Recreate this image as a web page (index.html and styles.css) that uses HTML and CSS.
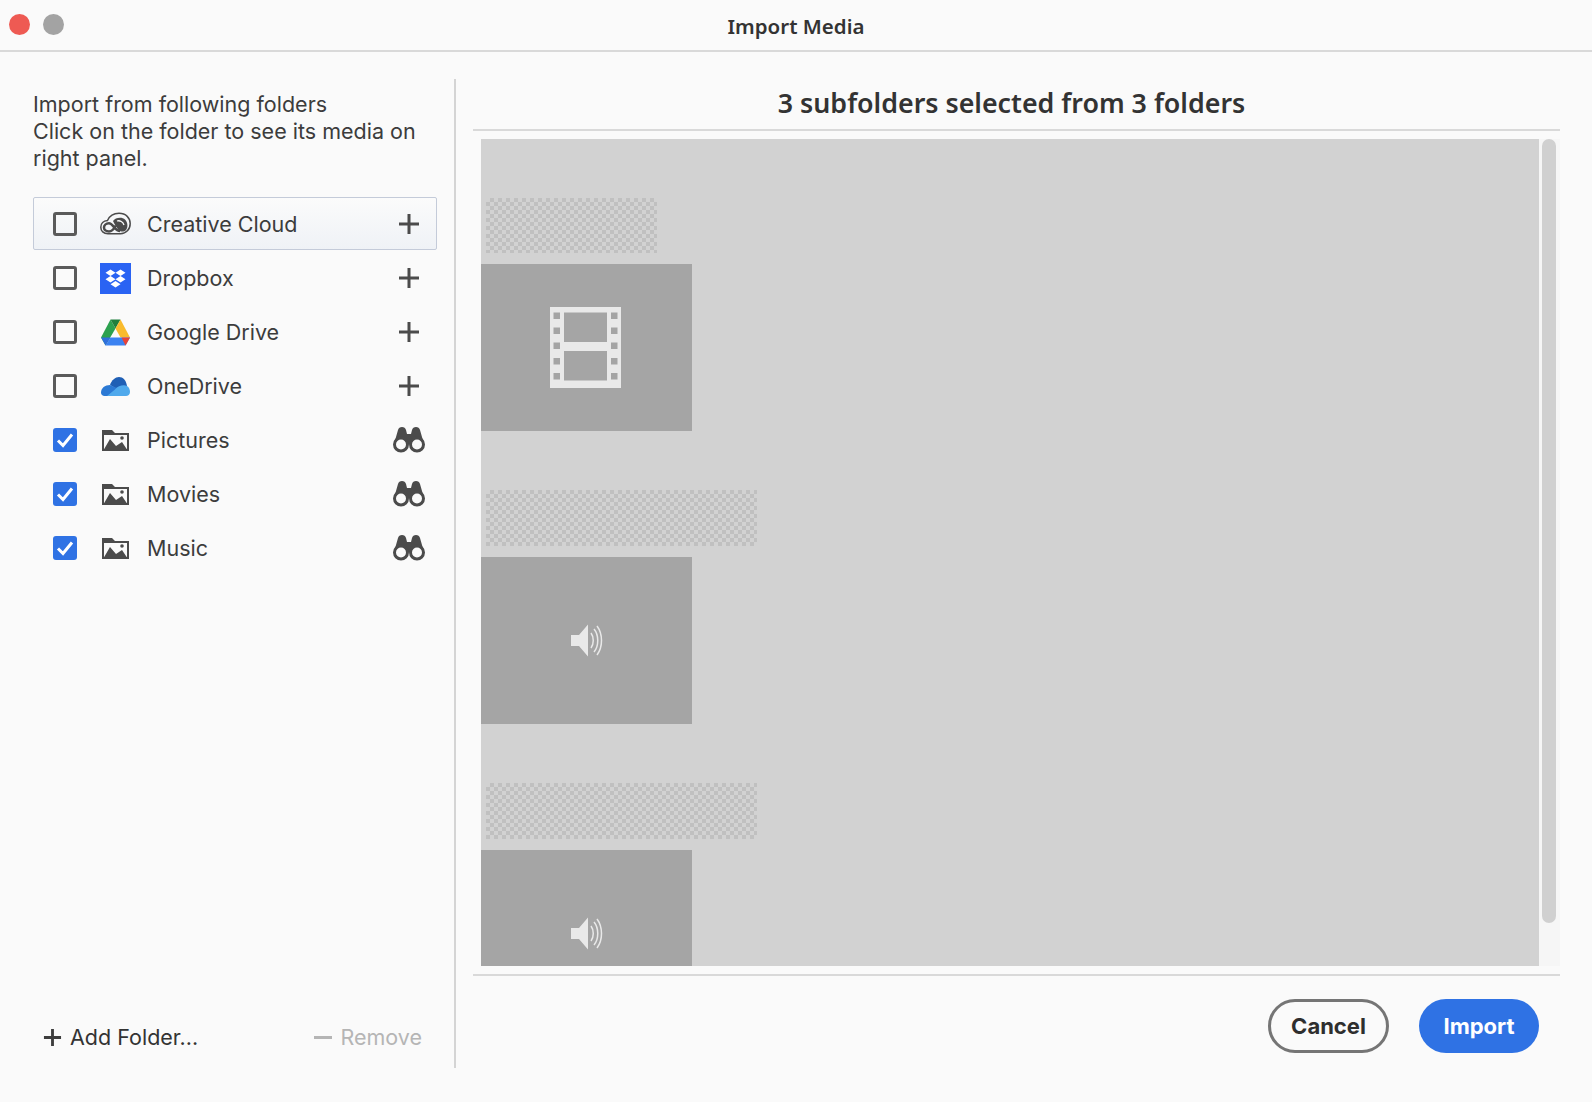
FILE: index.html
```html
<!DOCTYPE html>
<html lang="en">
<head>
  <meta charset="UTF-8" />
  <title>Import Media</title>
  <link rel="stylesheet" href="styles.css">
</head>
<body>
  <svg class="icon-defs" width="0" height="0">
    <symbol id="plus" viewBox="0 0 22 22">
      <path d="M11 1V21M1 11H21" stroke="#4b4b4b" stroke-width="3" fill="none"/>
    </symbol>
    <symbol id="folder" viewBox="0 0 27 21">
      <path fill="#4b4b4b" d="M0 0H10L13 3H27V21H0Z"/>
      <rect x="2" y="5" width="23" height="14" fill="#fafafa"/>
      <path fill="#4b4b4b" d="M1 21L8 9L14 16L20 12L26 21Z"/>
      <circle cx="20" cy="8" r="1.800" fill="#4b4b4b"/>
    </symbol>
    <symbol id="binoculars" viewBox="0 0 32 26">
      <path fill="#4b4b4b" d="M5 3C5.500 1 7 0 9 0C11 0 12.500 1 13 3L14 7H18L19 3C19.500 1 21 0 23 0C25 0 26.500 1 27 3L31 17H1Z"/>
      <circle cx="8" cy="17.500" r="6.500" fill="#fafafa" stroke="#4b4b4b" stroke-width="3"/>
      <circle cx="24" cy="17.500" r="6.500" fill="#fafafa" stroke="#4b4b4b" stroke-width="3"/>
    </symbol>
    <symbol id="speaker" viewBox="0 0 32 33">
      <path fill="#e9e9e9" d="M0 11H8L17 .5V32.500L8 22H0Z"/>
      <path fill="none" stroke="#e9e9e9" stroke-width="1.500" d="M20 9C23 13 23 20 20 24M23 5C28 11 28 22 23 28M26 2C32 10 32 23 26 31"/>
    </symbol>
  </svg>

  <div class="titlebar">
    <div class="traffic-lights">
      <span class="light light-red"></span>
      <span class="light light-gray"></span>
    </div>
    <div class="window-title">Import Media</div>
  </div>

  <div class="main-container">
    <div class="sidebar">
      <p class="intro">Import from following folders<br>Click on the folder to see its media on right panel.</p>

      <div class="folder-list">
        <div class="folder-row active">
          <span class="check"></span>
          <svg class="source-icon" viewBox="0 -4.500 31 31">
            <path fill="none" stroke="#4b4b4b" stroke-width="1.500" d="M8 21.200C3.500 21.200 .8 18.500 .8 14.800C.8 11 3.500 8.300 7.500 8C9.500 3.500 14 .8 19 .8C26 .8 30.200 5.500 30.200 11C30.200 17 26 21.200 20.500 21.200Z"/>
            <path fill="none" stroke="#4b4b4b" stroke-width="2.500" d="M20 18.500C15 18.500 13 10.800 9 10.800C6 10.800 4 12.800 4 15C4 17.300 6 19 9 19C12 19 14 16.500 16 13"/>
            <path fill="#4b4b4b" d="M13 8.500C15 5 22 4 25 7C28 10 28 15 26 17.500C24 19.500 20.500 19.500 18.500 17.500L14.500 11.500Z"/>
            <path fill="none" stroke="#fafafa" stroke-width="1.300" d="M17 8.500C20 7.500 23 9.500 24 12.500"/>
          </svg>
          <span class="folder-name">Creative Cloud</span>
          <svg class="row-action plus-icon"><use href="#plus"/></svg>
        </div>
        <div class="folder-row">
          <span class="check"></span>
          <svg class="source-icon" viewBox="0 0 31 31">
            <rect width="31" height="31" fill="#2a63f3"/>
            <path fill="#fff" d="M10.500 6.500L15.500 9.700L10.500 13L5.500 9.700ZM20.500 6.500L25.500 9.700L20.500 13L15.500 9.700ZM10.500 13L15.500 16.300L10.500 19.500L5.500 16.300ZM20.500 13L25.500 16.300L20.500 19.500L15.500 16.300ZM15.500 18L20.500 21.200L15.500 24.500L10.500 21.200Z"/>
          </svg>
          <span class="folder-name">Dropbox</span>
          <svg class="row-action plus-icon"><use href="#plus"/></svg>
        </div>
        <div class="folder-row">
          <span class="check"></span>
          <svg class="source-icon" viewBox="-1 -2.500 31 31">
            <path fill="#2ca14f" d="M9.500 0L14.500 9L4.500 26L0 18Z"/>
            <path fill="#1f7f3c" d="M9.500 0H19.500L14.500 9Z"/>
            <path fill="#f9bb2d" d="M19.500 0L29 18H19.500L14.500 9Z"/>
            <path fill="#3b82f1" d="M9.500 18H29L24.500 26H4.500Z"/>
            <path fill="#2f6fdc" d="M0 18H9.500L4.500 26Z"/>
            <path fill="#ea4335" d="M20.500 18H29L24.500 26Z"/>
          </svg>
          <span class="folder-name">Google Drive</span>
          <svg class="row-action plus-icon"><use href="#plus"/></svg>
        </div>
        <div class="folder-row">
          <span class="check"></span>
          <svg class="source-icon" viewBox="-1 -6 31 31">
            <path fill="#1f5fb5" d="M9 8C10.500 3 14.500 0 18 0C22 0 25 3 26 9L16 12Z"/>
            <path fill="#2b79d4" d="M0 15.500C0 11 4 8 9 8L18 12L7 19H3.500C1.500 19 0 17.500 0 15.500Z"/>
            <path fill="#4fa9ec" d="M6 19L14 12.500C17 8.500 23 7.500 26 9C28 10 29 12.500 29 15C29 17.500 27 19 25 19Z"/>
          </svg>
          <span class="folder-name">OneDrive</span>
          <svg class="row-action plus-icon"><use href="#plus"/></svg>
        </div>
        <div class="folder-row">
          <span class="check checked"><svg viewBox="0 0 24 24"><path d="M5 12.500L10 17.500L19 6.500" stroke="#fff" stroke-width="3" fill="none"/></svg></span>
          <svg class="source-icon folder-icon"><use href="#folder"/></svg>
          <span class="folder-name">Pictures</span>
          <svg class="row-action binoculars-icon"><use href="#binoculars"/></svg>
        </div>
        <div class="folder-row">
          <span class="check checked"><svg viewBox="0 0 24 24"><path d="M5 12.500L10 17.500L19 6.500" stroke="#fff" stroke-width="3" fill="none"/></svg></span>
          <svg class="source-icon folder-icon"><use href="#folder"/></svg>
          <span class="folder-name">Movies</span>
          <svg class="row-action binoculars-icon"><use href="#binoculars"/></svg>
        </div>
        <div class="folder-row">
          <span class="check checked"><svg viewBox="0 0 24 24"><path d="M5 12.500L10 17.500L19 6.500" stroke="#fff" stroke-width="3" fill="none"/></svg></span>
          <svg class="source-icon folder-icon"><use href="#folder"/></svg>
          <span class="folder-name">Music</span>
          <svg class="row-action binoculars-icon"><use href="#binoculars"/></svg>
        </div>
      </div>

      <div class="sidebar-footer">
        <div class="add-folder">
          <svg class="small-plus" viewBox="0 0 20 20"><path d="M10 1V19M1 10H19" stroke="#3d3d3d" stroke-width="3" fill="none"/></svg>
          Add Folder...
        </div>
        <div class="remove-folder">
          <span class="minus"></span>
          Remove
        </div>
      </div>
    </div>

    <div class="content">
      <div class="content-title">3 subfolders selected from 3 folders</div>
      <div class="media-panel">
        <div class="media-list">
          <div class="media-group">
            <div class="placeholder short"></div>
            <div class="media-tile">
              <svg class="film-icon" viewBox="0 0 71 81">
                <path fill-rule="evenodd" fill="#e9e9e9" d="M0 0H71V81H0ZM14 5.500V35H57V5.500ZM14 44V73.500H57V44Z"/>
                <path fill="#a5a5a5" d="M3.500 5.500H10V12H3.500ZM3.500 20.500H10V27H3.500ZM3.500 35.500H10V42H3.500ZM3.500 51H10V57.500H3.500ZM3.500 66H10V72.500H3.500ZM61 5.500H67.500V12H61ZM61 20.500H67.500V27H61ZM61 35.500H67.500V42H61ZM61 51H67.500V57.500H61ZM61 66H67.500V72.500H61Z"/>
              </svg>
            </div>
          </div>
          <div class="media-group">
            <div class="placeholder"></div>
            <div class="media-tile">
              <svg class="speaker-icon"><use href="#speaker"/></svg>
            </div>
          </div>
          <div class="media-group">
            <div class="placeholder"></div>
            <div class="media-tile">
              <svg class="speaker-icon"><use href="#speaker"/></svg>
            </div>
          </div>
        </div>
        <div class="scroll-track"><div class="scroll-thumb"></div></div>
      </div>
      <div class="content-footer">
        <button class="btn btn-cancel">Cancel</button>
        <button class="btn btn-import">Import</button>
      </div>
    </div>
  </div>
</body>
</html>
```

FILE: styles.css
```css
* {
  margin: 0;
  padding: 0;
  box-sizing: border-box;
}
body {
  background-color: #fafafa;
  color: #3c3c3c;
  font-family: 'Inter', 'Liberation Sans', sans-serif;
  height: 1102px;
  overflow: hidden;
  display: flex;
  flex-direction: column;
}
.icon-defs {
  position: absolute;
}
/* Title bar */
.titlebar {
  height: 52px;
  flex: none;
  border-bottom: 2px solid #d9d9d9;
  display: flex;
  align-items: center;
  justify-content: center;
  position: relative;
}
.traffic-lights {
  position: absolute;
  left: 9px;
  top: 14px;
  display: flex;
  gap: 13px;
}
.light {
  width: 21px;
  height: 21px;
  border-radius: 50%;
}
.light-red {
  background-color: #ee5a53;
}
.light-gray {
  background-color: #a3a3a3;
}
.window-title {
  font-family: 'Noto Sans', sans-serif;
  font-size: 20.5px;
  font-weight: 600;
  color: #333;
  padding-top: 2px;
}
/* Layout */
.main-container {
  flex: 1;
  display: flex;
  padding-top: 27px;
  padding-bottom: 34px;
  min-height: 0;
}
.sidebar {
  width: 456px;
  flex: none;
  border-right: 2px solid #d4d4d4;
  padding: 12px 17px 0 33px;
  display: flex;
  flex-direction: column;
}
.intro {
  font-size: 21.5px;
  line-height: 27px;
  color: #3c3c3c;
  margin-bottom: 25px;
}
/* Folder rows */
.folder-list {
  display: flex;
  flex-direction: column;
}
.folder-row {
  height: 54px;
  display: flex;
  align-items: center;
  padding-left: 20px;
  font-size: 21.5px;
}
.folder-row.active {
  border: 1px solid #c4cbd9;
  border-radius: 2px;
  background: linear-gradient(#fbfbfb, #eff2f6);
  padding-left: 19px;
  height: 53px;
  margin-bottom: 1px;
}
.folder-row.active .plus-icon {
  margin-right: 16px;
}
.check {
  width: 24px;
  height: 24px;
  flex: none;
  border: 3px solid #5a5a5a;
  border-radius: 3px;
  margin-right: 23px;
}
.check.checked {
  background-color: #2f72e4;
  border: none;
}
.check svg {
  display: block;
  width: 24px;
  height: 24px;
}
.source-icon {
  width: 31px;
  height: 31px;
  flex: none;
  margin-right: 16px;
}
.folder-icon {
  width: 27px;
  height: 21px;
  margin-left: 2px;
  margin-right: 18px;
}
.folder-name {
  flex: 1;
}
.row-action {
  flex: none;
}
.plus-icon {
  width: 22px;
  height: 22px;
  margin-right: 17px;
}
.binoculars-icon {
  width: 32px;
  height: 26px;
  margin-right: 12px;
}
/* Sidebar footer */
.sidebar-footer {
  margin-top: auto;
  padding: 0 15px 17px 10px;
  display: flex;
  justify-content: space-between;
  align-items: center;
  font-size: 21.5px;
  line-height: 27px;
}
.add-folder {
  display: flex;
  align-items: center;
  gap: 8px;
  color: #333;
}
.small-plus {
  width: 19px;
  height: 19px;
}
.remove-folder {
  display: flex;
  align-items: center;
  gap: 8px;
  color: #b5b5b5;
}
.minus {
  width: 18px;
  height: 3px;
  background-color: #b5b5b5;
}
/* Right panel */
.content {
  flex: 1;
  margin: 0 32px 0 17px;
  display: flex;
  flex-direction: column;
  min-width: 0;
}
.content-title {
  height: 52px;
  flex: none;
  border-bottom: 2px solid #d9d9d9;
  font-family: 'Noto Sans', sans-serif;
  font-size: 26.8px;
  font-weight: 600;
  color: #333;
  text-align: center;
  line-height: 48px;
  padding-right: 10px;
}
.media-panel {
  height: 827px;
  flex: none;
  margin: 8px 0 8px 8px;
  display: flex;
}
.media-list {
  flex: 1;
  background-color: #d2d2d2;
  overflow: hidden;
}
.media-group {
  padding-top: 59px;
}
.placeholder {
  width: 271px;
  height: 56px;
  margin: 0 0 11px 5px;
  background-color: #d2d2d2;
  background-image: repeating-conic-gradient(#c0c0c0 0 25%, #d2d2d2 0 50%);
  background-size: 8px 8px;
}
.placeholder.short {
  width: 171px;
  height: 55px;
}
.media-tile {
  width: 211px;
  height: 167px;
  background-color: #a5a5a5;
  display: flex;
  align-items: center;
  justify-content: center;
}
.film-icon {
  width: 71px;
  height: 81px;
  margin-right: 2px;
}
.speaker-icon {
  width: 32px;
  height: 33px;
}
.scroll-track {
  width: 21px;
  flex: none;
  background-color: #f6f6f6;
  padding: 0 4px 0 3px;
}
.scroll-thumb {
  height: 784px;
  background-color: #d0d0d0;
  border-radius: 7px;
}
/* Buttons */
.content-footer {
  border-top: 2px solid #d9d9d9;
  padding: 23px 21px 0 0;
  display: flex;
  justify-content: flex-end;
  gap: 30px;
}
.btn {
  height: 54px;
  width: 121px;
  border-radius: 27px;
  font-family: 'Inter', sans-serif;
  font-size: 22px;
  font-weight: 700;
}
.btn-cancel {
  background-color: #fafafa;
  border: 3px solid #757575;
  color: #2e2e2e;
}
.btn-import {
  width: 120px;
  background-color: #2f72e4;
  border: none;
  color: #fff;
}
```
